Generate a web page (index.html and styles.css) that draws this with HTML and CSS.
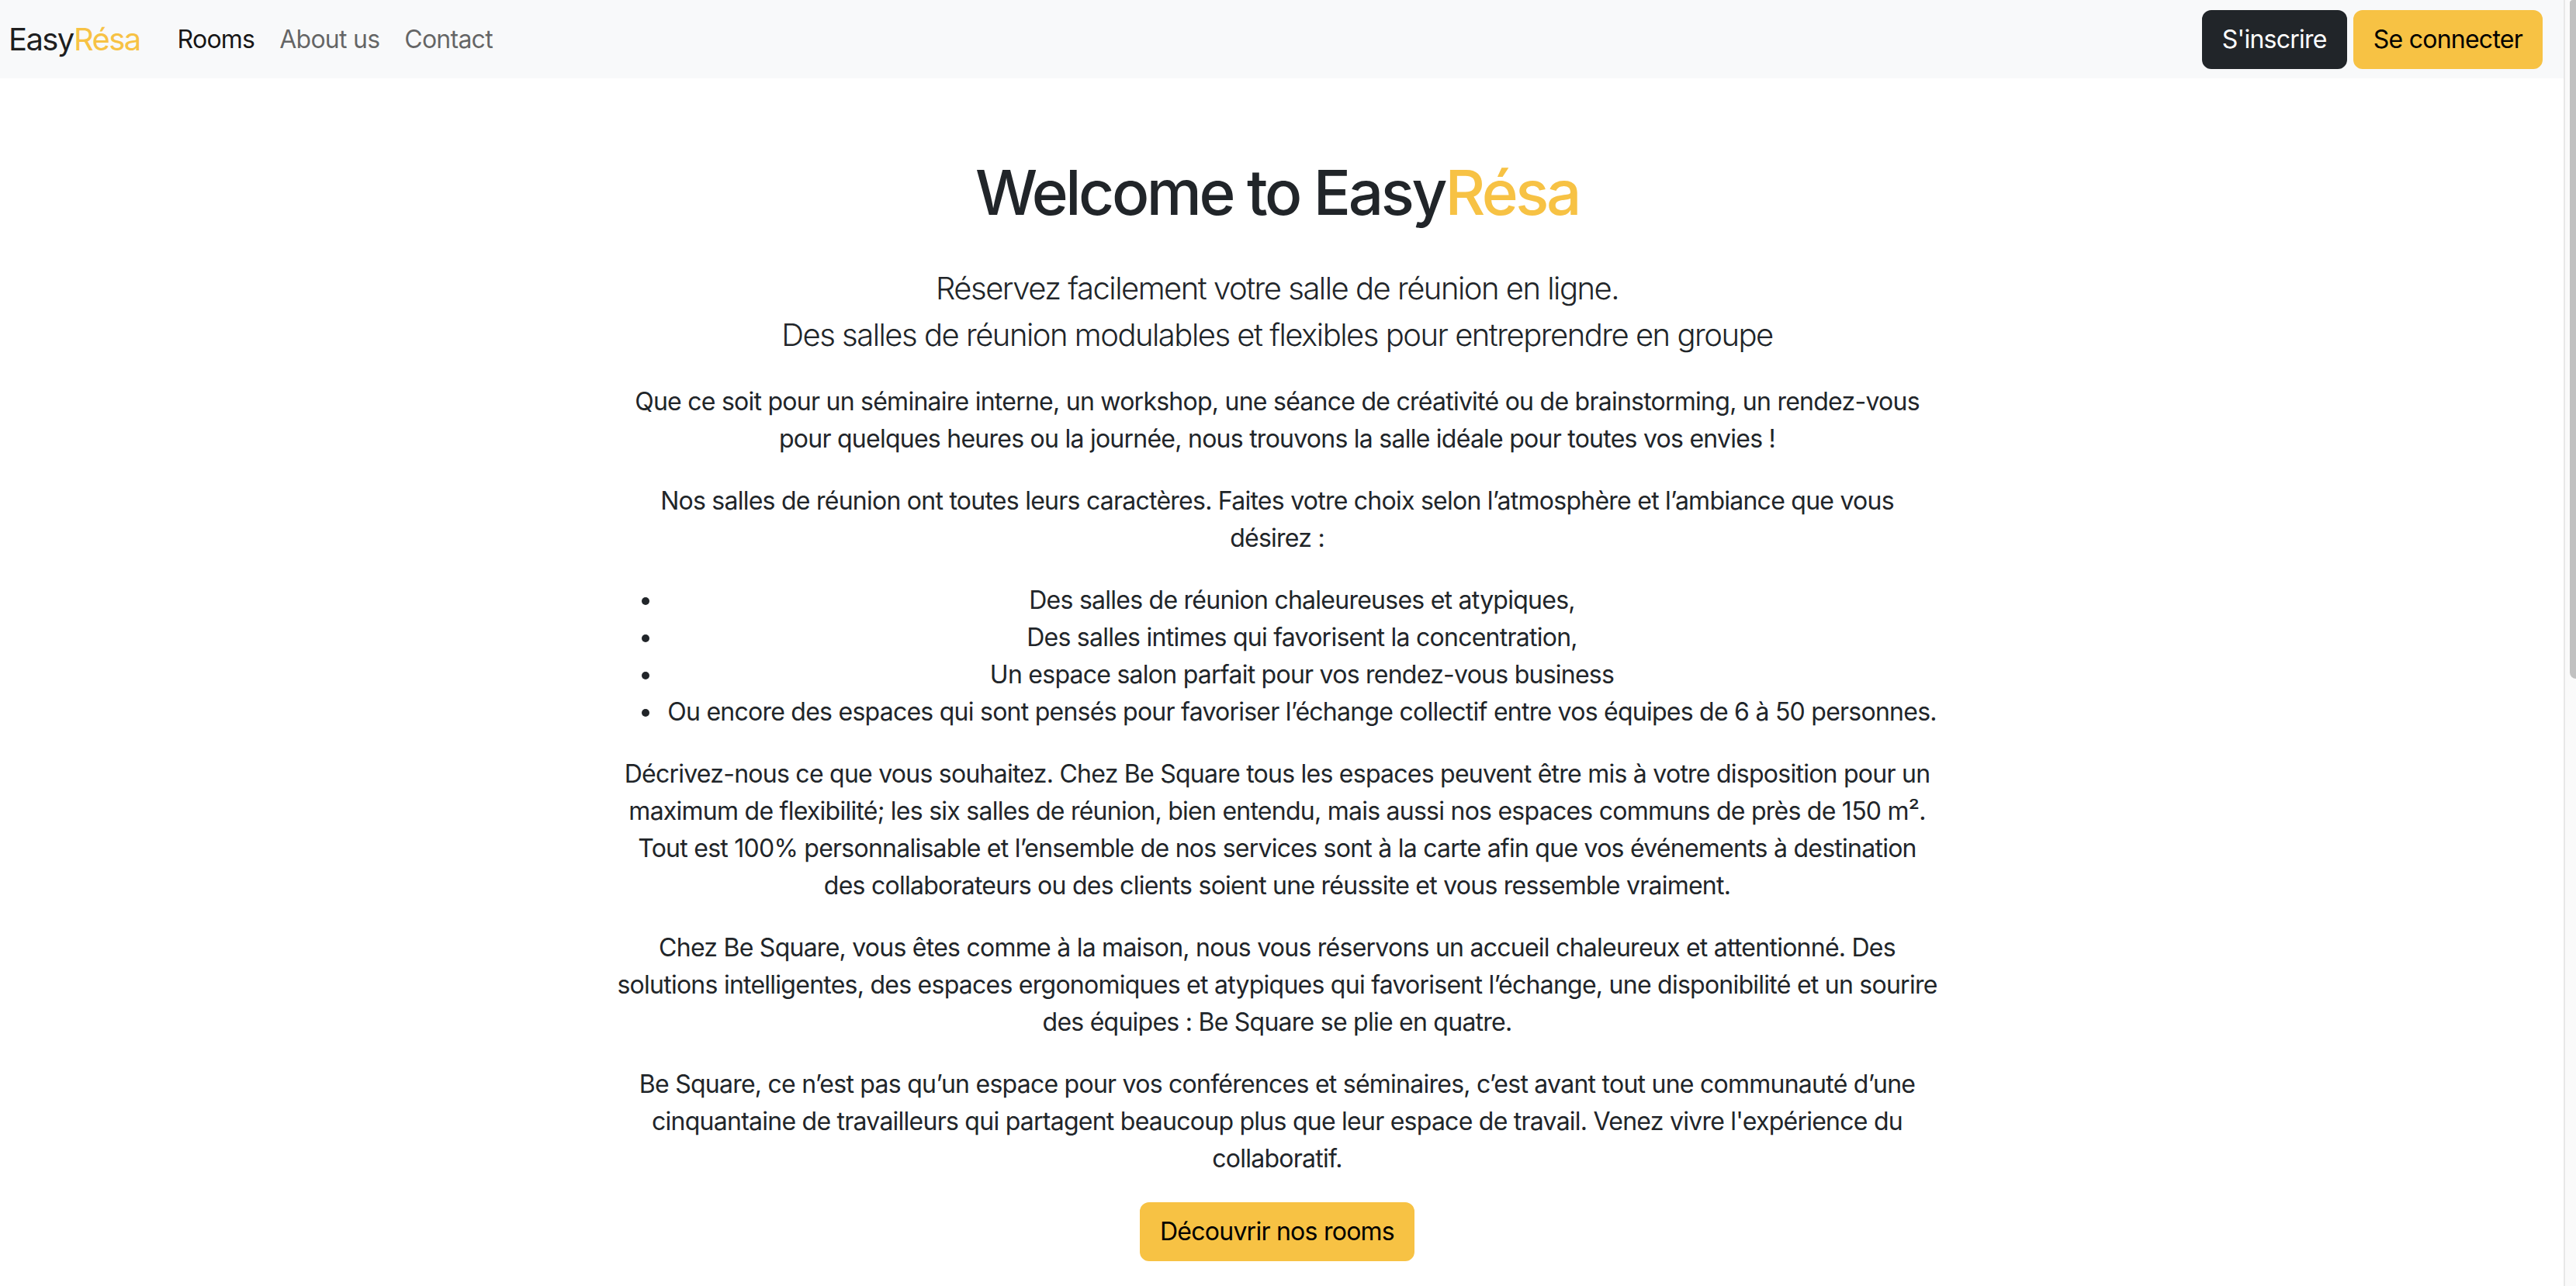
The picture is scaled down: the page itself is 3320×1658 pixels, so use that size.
FILE: index.html
```html
<!DOCTYPE html>
<html lang="fr">
<head>
<meta charset="utf-8">
<title>EasyRésa</title>
<link rel="stylesheet" href="styles.css">
</head>
<body>
<div class="viewport">
<div class="page">
  <nav class="navbar">
    <a class="brand" href="#">Easy<span class="accent">Résa</span></a>
    <ul class="nav">
      <li><a class="nav-link active" href="#">Rooms</a></li>
      <li><a class="nav-link" href="#">About us</a></li>
      <li><a class="nav-link" href="#">Contact</a></li>
    </ul>
    <div class="nav-actions">
      <a class="btn btn-dark" href="#">S'inscrire</a>
      <a class="btn btn-warning" href="#">Se connecter</a>
    </div>
  </nav>

  <main class="main">
    <div class="content">
      <h1 class="title">Welcome to Easy<span class="accent">Résa</span></h1>
      <p class="lead">Réservez facilement votre salle de réunion en ligne.<br>Des salles de réunion modulables et flexibles pour entreprendre en groupe</p>
      <p>Que ce soit pour un séminaire interne, un workshop, une séance de créativité ou de brainstorming, un rendez-vous<br>pour quelques heures ou la journée, nous trouvons la salle idéale pour toutes vos envies&nbsp;!</p>
      <p>Nos salles de réunion ont toutes leurs caractères. Faites votre choix selon l’atmosphère et l’ambiance que vous<br>désirez&nbsp;:</p>
      <ul class="list">
        <li>Des salles de réunion chaleureuses et atypiques,</li>
        <li>Des salles intimes qui favorisent la concentration,</li>
        <li>Un espace salon parfait pour vos rendez-vous business</li>
        <li>Ou encore des espaces qui sont pensés pour favoriser l’échange collectif entre vos équipes de 6 à 50 personnes.</li>
      </ul>
      <p>Décrivez-nous ce que vous souhaitez. Chez Be Square tous les espaces peuvent être mis à votre disposition pour un<br>maximum de flexibilité; les six salles de réunion, bien entendu, mais aussi nos espaces communs de près de 150 m².<br>Tout est 100% personnalisable et l’ensemble de nos services sont à la carte afin que vos événements à destination<br>des collaborateurs ou des clients soient une réussite et vous ressemble vraiment.</p>
      <p>Chez Be Square, vous êtes comme à la maison, nous vous réservons un accueil chaleureux et attentionné. Des<br>solutions intelligentes, des espaces ergonomiques et atypiques qui favorisent l’échange, une disponibilité et un sourire<br>des équipes&nbsp;: Be Square se plie en quatre.</p>
      <p>Be Square, ce n’est pas qu’un espace pour vos conférences et séminaires, c’est avant tout une communauté d’une<br>cinquantaine de travailleurs qui partagent beaucoup plus que leur espace de travail. Venez vivre l'expérience du<br>collaboratif.</p>
      <a class="btn btn-warning" href="#">Découvrir nos rooms</a>
    </div>
  </main>
</div>
<div class="scrollbar" aria-hidden="true"><div class="scrollbar-thumb"></div></div>
</div>
</body>
</html>
```

FILE: styles.css
```css
* { box-sizing: border-box; }

html, body {
  margin: 0;
  padding: 0;
  height: 100%;
  overflow: hidden;
}

body {
  font-family: Inter, "Noto Sans", "Liberation Sans", sans-serif;
  font-size: 32px;
  line-height: 1.5;
  letter-spacing: -0.75px;
  color: #212529;
  background: #fff;
}

a { text-decoration: none; }

/* window: page column + scrollbar column */
.viewport {
  display: flex;
  height: 100vh;
}

.page {
  flex: 1;
  min-width: 0;
}

.scrollbar {
  width: 16px;
  flex: none;
  background: #fafafa;
  border-left: 2px solid #e8e8e8;
  display: flex;
  justify-content: flex-end;
  align-items: flex-start;
}

.scrollbar-thumb {
  width: 8px;
  height: 875px;
  background: #c1c1c1;
  border-radius: 4px 0 0 8px;
}

.accent { color: #f7c244; }

/* Navbar */
.navbar {
  display: flex;
  align-items: center;
  height: 101px;
  padding: 0 27px 0 11px;
  background: #f8f9fa;
}

.brand {
  font-size: 40px;
  line-height: 60px;
  letter-spacing: -1.6px;
  color: rgba(0, 0, 0, 0.9);
  margin-right: 32px;
}

.nav {
  display: flex;
  list-style: none;
  margin: 0;
  padding: 0;
}

.nav-link {
  display: block;
  padding: 16px 16px;
  color: rgba(0, 0, 0, 0.6);
  font-size: 32px;
  line-height: 48px;
}

.nav-link.active { color: rgba(0, 0, 0, 0.92); }

.nav-actions {
  margin-left: auto;
  display: flex;
  gap: 8px;
}

/* Buttons */
.btn {
  display: inline-block;
  padding: 12px 24px;
  font-size: 32px;
  line-height: 48px;
  border: 2px solid transparent;
  border-radius: 12px;
  text-align: center;
}

.btn-dark {
  background: #212529;
  border-color: #212529;
  color: #fff;
}

.btn-warning {
  background: #f7c244;
  border-color: #f7c244;
  color: #000;
}

/* Main */
.main {
  padding: 99px 12px 0 0;
}

.content {
  max-width: 1760px;
  margin: 0 auto;
  text-align: center;
}

.title {
  margin: 0 0 46px;
  font-size: 80px;
  line-height: 1.2;
  font-weight: 500;
  letter-spacing: -3.4px;
}

p { margin: 0 0 32px; }

.lead {
  font-size: 40px;
  line-height: 60px;
  font-weight: 300;
  letter-spacing: -1.5px;
}

.list {
  margin: 0 auto 32px;
  padding-left: 64px;
  max-width: 1712px;
}
```
